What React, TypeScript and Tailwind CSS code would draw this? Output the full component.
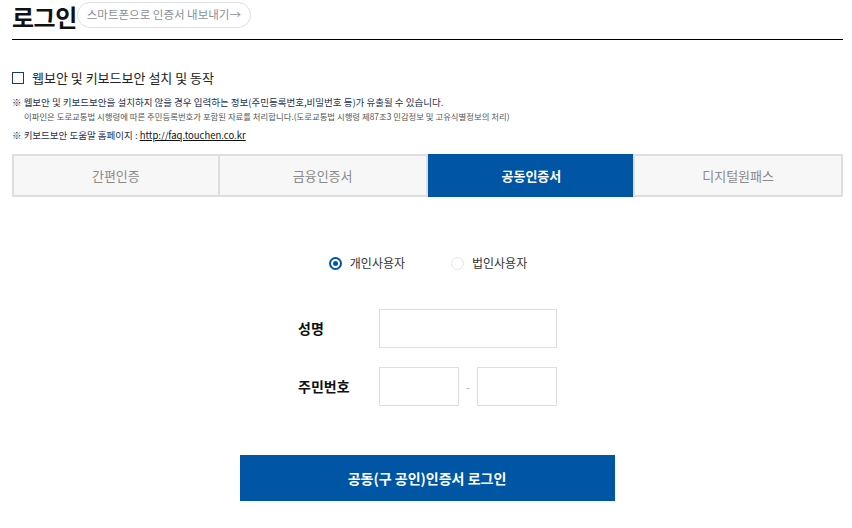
import React from "react";

const FONT = { fontFamily: '"Noto Sans CJK KR", "Noto Sans", sans-serif' };

const TABS = ["간편인증", "금융인증서", "공동인증서", "디지털원패스"];

export default function App() {
  return (
    <div className="w-[852px] h-[528px] bg-white text-[#111] overflow-hidden" style={FONT}>
      {/* header */}
      <div className="ml-3 mr-[9px] h-[40px] flex items-start border-b border-black">
        <h1 className="text-[24px] font-bold leading-[32px] mt-[1px] tracking-[-0.5px]">로그인</h1>
        <span className="mt-[2px] h-[26px] px-[9px] flex items-center rounded-full border border-[#dcdfe6] text-[11.5px] text-[#8a8f99]">
          스마트폰으로 인증서 내보내기→
        </span>
      </div>

      {/* security */}
      <div className="ml-3 mr-[9px] mt-[30px]">
        <label className="flex items-center gap-[8px] h-[16px]">
          <span className="w-[12px] h-[12px] border border-[#1f3a5c] bg-white" />
          <span className="text-[13px] text-[#222]">웹보안 및 키보드보안 설치 및 동작</span>
        </label>
        <p className="mt-[9px] text-[9.5px] leading-[14px] text-[#1c2f4f]">
          ※ 웹보안 및 키보드보안을 설치하지 않을 경우 입력하는 정보(주민등록번호,비밀번호 등)가 유출될 수 있습니다.
        </p>
        <p className="pl-[12px] text-[8.4px] leading-[14px] text-[#555]">
          이파인은 도로교통법 시행령에 따른 주민등록번호가 포함된 자료를 처리합니다.(도로교통법 시행령 제87조3 민감정보 및 고유식별정보의 처리)
        </p>
        <p className="mt-[5px] text-[9.5px] leading-[14px] text-[#1c2f4f]">
          ※ 키보드보안 도움말 홈페이지 : <span className="underline text-[#111]">http://faq.touchen.co.kr</span>
        </p>
      </div>

      {/* tabs */}
      <div className="ml-3 mr-[9px] mt-[12px] grid grid-cols-4 h-[43px]">
        {TABS.map((t, i) =>
          i === 2 ? (
            <div key={t} className="flex items-center justify-center bg-[#0055a5] text-white text-[13px] font-bold">
              {t}
            </div>
          ) : (
            <div
              key={t}
              className="flex items-center justify-center bg-[#f7f7f7] border-2 border-[#dedede] text-[13px] text-[#8a8a8a] -ml-[2px] first:ml-0"
            >
              {t}
            </div>
          )
        )}
      </div>

      {/* user type */}
      <div className="mt-[57px] flex justify-center gap-[46px] pl-[4px]">
        <label className="flex items-center gap-[8px] text-[12px] text-[#333]">
          <span className="w-[13px] h-[13px] rounded-full border-2 border-[#0055a5] flex items-center justify-center">
            <span className="w-[5px] h-[5px] rounded-full bg-[#0055a5]" />
          </span>
          개인사용자
        </label>
        <label className="flex items-center gap-[8px] text-[12px] text-[#333]">
          <span className="w-[13px] h-[13px] rounded-full border border-[#e6e6e6]" />
          법인사용자
        </label>
      </div>

      {/* form */}
      <div className="mt-[37px] ml-[298px] flex flex-col gap-[19px]">
        <div className="flex items-center">
          <span className="w-[81px] text-[14px] font-bold">성명</span>
          <div className="w-[178px] h-[39px] border border-[#dedede]" />
        </div>
        <div className="flex items-center">
          <span className="w-[81px] text-[14px] font-bold">주민번호</span>
          <div className="w-[80px] h-[39px] border border-[#dedede]" />
          <span className="w-[18px] text-center text-[10px] text-[#999]">-</span>
          <div className="w-[80px] h-[39px] border border-[#dedede]" />
        </div>
      </div>

      {/* submit */}
      <div className="mt-[49px] flex justify-center pl-[2px]">
        <button className="w-[375px] h-[46px] bg-[#0055a5] text-white text-[14px] font-bold">
          공동(구 공인)인증서 로그인
        </button>
      </div>
    </div>
  );
}
